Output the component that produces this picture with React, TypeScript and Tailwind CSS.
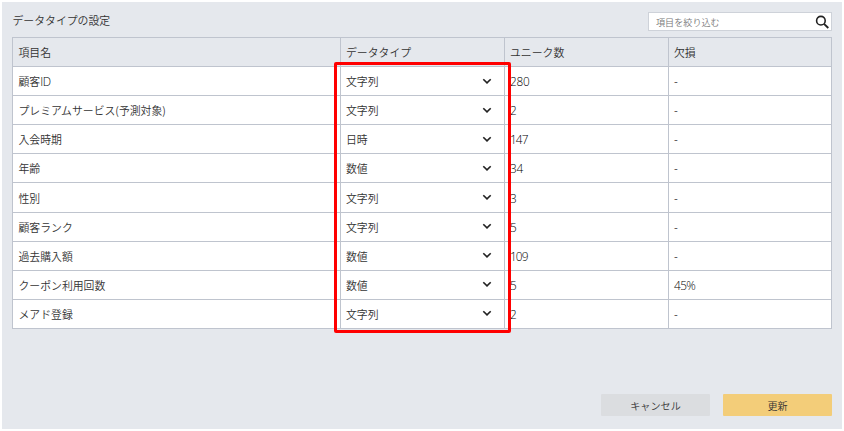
const rows = [
  { name: '顧客', latin: 'ID', type: '文字列', unique: '280', missing: '-' },
  { name: 'プレミアムサービス(予測対象)', type: '文字列', unique: '2', missing: '-' },
  { name: '入会時期', type: '日時', unique: '147', missing: '-' },
  { name: '年齢', type: '数値', unique: '34', missing: '-' },
  { name: '性別', type: '文字列', unique: '3', missing: '-' },
  { name: '顧客ランク', type: '文字列', unique: '5', missing: '-' },
  { name: '過去購入額', type: '数値', unique: '109', missing: '-' },
  { name: 'クーポン利用回数', type: '数値', unique: '5', missing: '45%' },
  { name: 'メアド登録', type: '文字列', unique: '2', missing: '-' },
];

const rowGrid =
  'grid h-[29.1px] grid-cols-[328px_164px_164px_163px] divide-x divide-[#bfc4ce] border-b border-[#bfc4ce]';
const cell = 'flex items-center px-[5px]';
const figure = "font-['Open_Sans','Noto_Sans_CJK_JP',sans-serif] text-[11.8px] font-light text-black";

function Chevron() {
  return (
    <svg viewBox="0 0 10 7" className="mr-[7px] h-[7px] w-[10px]" fill="none" stroke="#222" strokeWidth="1.6">
      <path d="M1.3 1.2 5 4.9 8.7 1.2" />
    </svg>
  );
}

export default function App() {
  return (
    <div className="h-[431px] w-[844px] bg-white p-[2px] font-['Noto_Sans_CJK_JP',sans-serif] text-[10.85px] leading-4 font-[350] text-[#333]">
      <main className="flex h-[427px] flex-col bg-[#e5e8ed] pl-[10px] pr-[10px]">
        <header className="flex h-[35px] items-center justify-between">
          <h1 className="pl-[0.5px] font-[350]">データタイプの設定</h1>
          <label className="mt-[4px] flex h-[19px] w-[184px] items-center border border-[#ced2d9] bg-white pl-[7px] pr-[2px]">
            <input
              placeholder="項目を絞り込む"
              className="min-w-0 flex-1 bg-transparent text-[9.1px] outline-none placeholder:text-[#777]"
            />
            <svg viewBox="0 0 14 14" className="h-[14px] w-[14px]" fill="none" stroke="#222">
              <circle cx="5.9" cy="5.7" r="4.3" strokeWidth="1.6" />
              <path d="m9 8.9 4.3 4.1" strokeWidth="1.9" />
            </svg>
          </label>
        </header>
        <section className="relative w-[820px] border-x border-t border-[#bfc4ce]">
          <div className={rowGrid}>
            <div className="flex items-center pl-[5.5px]">項目名</div>
            <div className={cell}>データタイプ</div>
            <div className={cell}>ユニーク数</div>
            <div className={cell}>欠損</div>
          </div>
          {rows.map((row) => (
            <div key={row.name} className={`${rowGrid} bg-white`}>
              <div className="flex items-center pl-[5.5px]">
                {row.name}
                {row.latin && <span className={`${figure} tracking-[-0.5px]`}>{row.latin}</span>}
              </div>
              <div className={`${cell} justify-between`}>
                {row.type}
                <Chevron />
              </div>
              <div className={`${cell} ${figure} ${row.unique.startsWith('1') ? 'tracking-[-0.9px]' : 'tracking-[-0.2px]'}`}>
                {row.unique}
              </div>
              <div className={`${cell} ${figure} tracking-[-0.6px]`}>{row.missing}</div>
            </div>
          ))}
          <div className="pointer-events-none absolute left-[321px] top-[24px] h-[271px] w-[177px] rounded-[2px] border-[3px] border-[#ff0000]" />
        </section>
        <footer className="mt-auto flex justify-end gap-[13px] pb-[13px] text-[10.1px]">
          <button className="h-[22px] w-[109px] rounded-[1px] bg-[#dbdde0] pt-[2px]">キャンセル</button>
          <button className="h-[22px] w-[109px] rounded-[1px] bg-[#f3cd79] pt-[2px]">更新</button>
        </footer>
      </main>
    </div>
  );
}
